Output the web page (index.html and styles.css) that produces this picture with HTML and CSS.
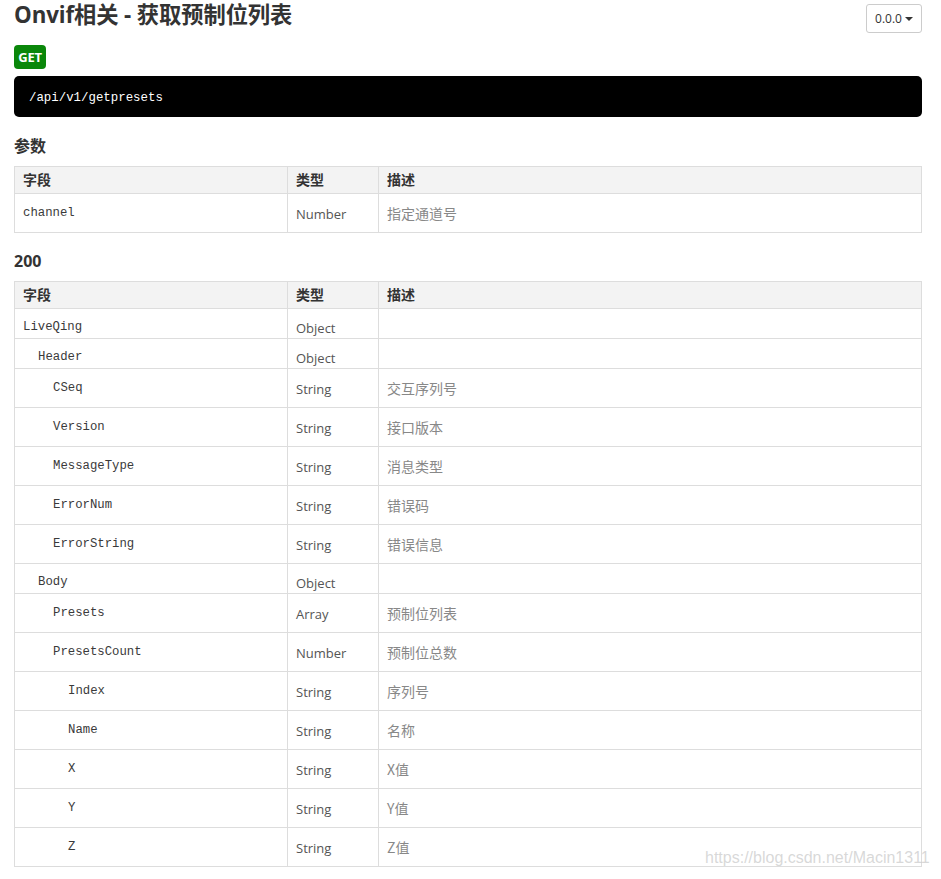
FILE: index.html
```html
<!DOCTYPE html>
<html lang="zh-CN">
<head>
<meta charset="utf-8">
<title>Onvif相关 - 获取预制位列表</title>
<link rel="stylesheet" href="styles.css">
</head>
<body>
<div class="page">
  <div class="head">
    <h1 class="title">Onvif相关 - 获取预制位列表</h1>
    <button class="version">0.0.0 <span class="caret"></span></button>
  </div>
  <div class="badge">GET</div>
  <pre class="endpoint">/api/v1/getpresets</pre>

  <h2 class="section">参数</h2>
  <table class="fields">
    <colgroup><col class="c1"><col class="c2"><col class="c3"></colgroup>
    <thead><tr><th>字段</th><th>类型</th><th>描述</th></tr></thead>
    <tbody>
      <tr class="tall"><td class="f">channel</td><td class="t">Number</td><td class="d">指定通道号</td></tr>
    </tbody>
  </table>

  <h2 class="section second">200</h2>
  <table class="fields">
    <colgroup><col class="c1"><col class="c2"><col class="c3"></colgroup>
    <thead><tr><th>字段</th><th>类型</th><th>描述</th></tr></thead>
    <tbody>
      <tr class="short"><td class="f">LiveQing</td><td class="t">Object</td><td class="d"></td></tr>
      <tr class="short"><td class="f l1">Header</td><td class="t">Object</td><td class="d"></td></tr>
      <tr class="tall"><td class="f l2">CSeq</td><td class="t">String</td><td class="d">交互序列号</td></tr>
      <tr class="tall"><td class="f l2">Version</td><td class="t">String</td><td class="d">接口版本</td></tr>
      <tr class="tall"><td class="f l2">MessageType</td><td class="t">String</td><td class="d">消息类型</td></tr>
      <tr class="tall"><td class="f l2">ErrorNum</td><td class="t">String</td><td class="d">错误码</td></tr>
      <tr class="tall"><td class="f l2">ErrorString</td><td class="t">String</td><td class="d">错误信息</td></tr>
      <tr class="short"><td class="f l1">Body</td><td class="t">Object</td><td class="d"></td></tr>
      <tr class="tall"><td class="f l2">Presets</td><td class="t">Array</td><td class="d">预制位列表</td></tr>
      <tr class="tall"><td class="f l2">PresetsCount</td><td class="t">Number</td><td class="d">预制位总数</td></tr>
      <tr class="tall"><td class="f l3">Index</td><td class="t">String</td><td class="d">序列号</td></tr>
      <tr class="tall"><td class="f l3">Name</td><td class="t">String</td><td class="d">名称</td></tr>
      <tr class="tall"><td class="f l3">X</td><td class="t">String</td><td class="d">X值</td></tr>
      <tr class="tall"><td class="f l3">Y</td><td class="t">String</td><td class="d">Y值</td></tr>
      <tr class="tall"><td class="f l3">Z</td><td class="t">String</td><td class="d">Z值</td></tr>
    </tbody>
  </table>
</div>
<div class="watermark">https://blog.csdn.net/Macin1311</div>
</body>
</html>
```

FILE: styles.css
```css
* { box-sizing: border-box; }
html, body { margin: 0; padding: 0; background: #fff; }
body {
  font-family: "Open Sans", "Noto Sans CJK SC", sans-serif;
  color: #333;
  font-size: 14px;
  position: relative;
  min-height: 879px;
  overflow: hidden;
}
.page {
  width: 908px;
  margin-left: 14px;
}
.head {
  display: flex;
  justify-content: space-between;
  align-items: flex-start;
  height: 30px;
}
.title {
  margin: 0;
  font-size: 22.3px;
  line-height: 30px;
  font-weight: 700;
  color: #333;
  letter-spacing: -0.1px;
}
.version {
  margin-top: 4px;
  height: 29px;
  width: 56px;
  padding: 0 6px;
  background: #fff;
  border: 1px solid #ccc;
  border-radius: 3px;
  font-family: "Open Sans", sans-serif;
  font-size: 12px;
  color: #333;
  display: flex;
  align-items: center;
  justify-content: center;
  gap: 3px;
}
.caret {
  display: inline-block;
  width: 0; height: 0;
  border-left: 4px solid transparent;
  border-right: 4px solid transparent;
  border-top: 4px solid #333;
  margin-top: 1px;
}
.badge {
  display: flex;
  align-items: center;
  justify-content: center;
  margin-top: 15px;
  width: 32px;
  height: 24px;
  background: #0a870a;
  color: #fff;
  font-weight: 700;
  font-size: 13px;
  border-radius: 4px;
  letter-spacing: -0.3px;
}
.endpoint {
  margin: 7px 0 0;
  height: 41px;
  background: #000;
  color: #fff;
  border-radius: 5px;
  padding: 3px 15px 0;
  font-family: "Liberation Mono", monospace;
  font-size: 12.4px;
  line-height: 38px;
}
.section {
  margin: 17px 0 8px;
  font-size: 16px;
  line-height: 24px;
  font-weight: 700;
  color: #333;
}
.section.second { margin-top: 16px; }
.fields {
  width: 908px;
  border-collapse: collapse;
  table-layout: fixed;
  border: 1px solid #ddd;
}
.c1 { width: 273px; }
.c2 { width: 91px; }
.fields th, .fields td {
  border: 1px solid #ddd;
  text-align: left;
  vertical-align: top;
  padding: 0 8px;
  line-height: 20px;
}
.fields th {
  background: #f3f3f3;
  font-weight: 700;
  font-size: 14px;
  color: #333;
  padding-top: 3px;
  padding-bottom: 3px;
}
.fields td.f {
  font-family: "Liberation Mono", monospace;
  font-size: 12.3px;
  color: #3a3a3a;
}
.fields td.t {
  font-family: "Open Sans", sans-serif;
  font-size: 13px;
  color: #555;
}
.fields td.d {
  font-family: "Noto Sans CJK SC", sans-serif;
  font-size: 14px;
  color: #888;
}
.fields td.l1 { padding-left: 23px; }
.fields td.l2 { padding-left: 38px; }
.fields td.l3 { padding-left: 53px; }
.short td { padding-top: 8px; padding-bottom: 1px; }
.short td.t { padding-top: 9px; padding-bottom: 0; }
.tall td { padding-top: 9px; padding-bottom: 9px; }
.tall td.t { padding-top: 10px; padding-bottom: 8px; }
.tall td.d { padding-top: 9px; padding-bottom: 9px; }
.watermark {
  position: absolute;
  left: 705px;
  top: 849px;
  font-family: "Liberation Sans", sans-serif;
  font-size: 16px;
  color: rgba(190, 190, 190, 0.6);
  white-space: nowrap;
}
```
